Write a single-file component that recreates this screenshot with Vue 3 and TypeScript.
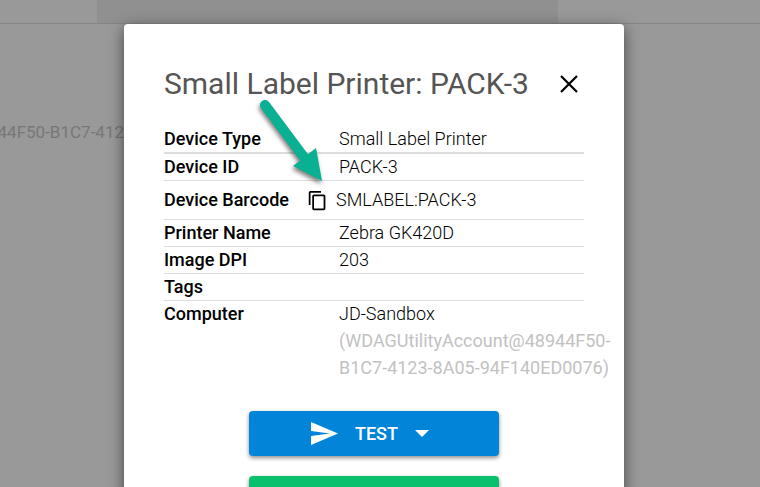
<script setup lang="ts">
interface DeviceRow {
  label: string
  value: string
  note?: string
  copyable?: boolean
}

const deviceName = 'Small Label Printer: PACK-3'

const rows: DeviceRow[] = [
  { label: 'Device Type', value: 'Small Label Printer' },
  { label: 'Device ID', value: 'PACK-3' },
  { label: 'Device Barcode', value: 'SMLABEL:PACK-3', copyable: true },
  { label: 'Printer Name', value: 'Zebra GK420D' },
  { label: 'Image DPI', value: '203' },
  { label: 'Tags', value: '' },
  {
    label: 'Computer',
    value: 'JD-Sandbox',
    note: '(WDAGUtilityAccount@48944F50-B1C7-4123-8A05-94F140ED0076)',
  },
]
</script>

<template>
  <div class="page">
    <header class="topbar"><div class="tab"></div></header>
    <p class="behind">44F50-B1C7-412</p>

    <div class="overlay">
      <section class="dialog" role="dialog" aria-labelledby="dialog-title">
        <div class="heading">
          <h1 id="dialog-title">{{ deviceName }}</h1>
          <button class="close" type="button" aria-label="Close">
            <svg viewBox="0 0 18 18" width="18" height="18">
              <path d="M1 1L17 17M17 1L1 17" fill="none" stroke="#000" stroke-width="2.2" />
            </svg>
          </button>
        </div>

        <table class="details">
          <tbody>
            <tr v-for="row in rows" :key="row.label" :class="{ barcode: row.copyable }">
              <th scope="row">{{ row.label }}</th>
              <td>
                <div v-if="row.copyable" class="copy-line">
                  <button class="copy" type="button" aria-label="Copy barcode">
                    <svg viewBox="0 0 24 24" width="21" height="21">
                      <path
                        fill="#000"
                        d="M16 1H4c-1.1 0-2 .9-2 2v14h2V3h12V1zm3 4H8c-1.1 0-2 .9-2 2v14c0 1.1.9 2 2 2h11c1.1 0 2-.9 2-2V7c0-1.1-.9-2-2-2zm0 16H8V7h11v14z"
                      />
                    </svg>
                  </button>
                  <span>{{ row.value }}</span>
                </div>
                <template v-else>{{ row.value }}</template>
                <div v-if="row.note" class="note">{{ row.note }}</div>
              </td>
            </tr>
          </tbody>
        </table>

        <div class="actions">
          <button class="action test" type="button">
            <svg viewBox="0 0 27 23" width="27" height="23">
              <path fill="#fff" d="M0 23L27 11.5L0 0V9L19 11.5L0 14Z" />
            </svg>
            <span>TEST</span>
            <svg viewBox="0 0 14 7" width="14" height="7">
              <path fill="#fff" d="M0 0H14L7 7Z" />
            </svg>
          </button>
          <button class="action confirm" type="button" aria-label="Confirm"></button>
        </div>

        <svg class="pointer" viewBox="0 0 80 100" width="80" height="100" aria-hidden="true">
          <path d="M15 15L56 70" fill="none" stroke="#09b091" stroke-width="10" stroke-linecap="round" />
          <path fill="#09b091" d="M72 91L66 58L43 76Z" />
        </svg>
      </section>
    </div>
  </div>
</template>

<style>
body {
  margin: 0;
  background: #999;
}
</style>

<style scoped>
.page {
  position: relative;
  height: 100vh;
  overflow: hidden;
  background: #999;
  font-family: Roboto, "Liberation Sans", sans-serif;
  font-size: 18px;
}
.topbar {
  height: 23px;
  padding: 0 202px 0 97px;
  border-bottom: 1px solid #858585;
}
.tab {
  height: 100%;
  background: #909090;
}
.behind {
  display: flex;
  justify-content: flex-end;
  width: 124px;
  margin: 96px 0 0;
  font-size: 17px;
  line-height: 24px;
  white-space: nowrap;
  color: #777;
}
.overlay {
  position: absolute;
  inset: 0;
  display: flex;
  justify-content: center;
  align-items: flex-start;
  padding: 24px 12px 0 0;
}
.dialog {
  position: relative;
  box-sizing: border-box;
  width: 500px;
  padding: 40px;
  border-radius: 4px;
  background: #fff;
  box-shadow: 0 4px 15px rgba(0, 0, 0, 0.55);
}
.heading {
  display: flex;
  align-items: center;
  justify-content: space-between;
  height: 40px;
  margin-bottom: 22px;
}
h1 {
  margin: 0;
  font-size: 30px;
  font-weight: 400;
  line-height: 40px;
  white-space: nowrap;
  color: #555;
}
button {
  border: 0;
  padding: 0;
  background: none;
  font: inherit;
  cursor: pointer;
}
.close {
  display: flex;
  padding: 6px;
}
.details {
  width: 100%;
  table-layout: fixed;
  border-collapse: separate;
  border-spacing: 0;
  line-height: 26px;
}
th,
td {
  padding: 0;
  text-align: left;
  vertical-align: middle;
  border-bottom: 1px solid #ddd;
}
th {
  width: 175px;
  font-weight: 500;
  color: #000;
}
td {
  font-weight: 300;
  color: #000;
}
tr:first-child > * {
  border-bottom-width: 2px;
}
tr:last-child > * {
  border-bottom: 0;
  vertical-align: top;
}
.barcode > * {
  height: 38px;
}
.copy-line {
  display: flex;
  align-items: center;
  gap: 8px;
  margin-left: -32px;
}
.copy {
  display: flex;
}
.note {
  margin-right: -32px;
  font-weight: 400;
  line-height: 27px;
  color: #c2c2c2;
}
.actions {
  display: flex;
  flex-direction: column;
  align-items: center;
  gap: 20px;
  margin-top: 30px;
}
.action {
  display: flex;
  align-items: center;
  justify-content: center;
  gap: 17px;
  width: 250px;
  height: 45px;
  border-radius: 4px;
  font-weight: 500;
  color: #fff;
  box-shadow: 0 2px 4px rgba(0, 0, 0, 0.45);
}
.test {
  padding-right: 8px;
  background: #0284d9;
}
.confirm {
  background: #0ac06d;
}
.pointer {
  position: absolute;
  left: 126px;
  top: 66px;
  filter: drop-shadow(-1px 3px 2px rgba(0, 0, 0, 0.5));
  pointer-events: none;
}
</style>
